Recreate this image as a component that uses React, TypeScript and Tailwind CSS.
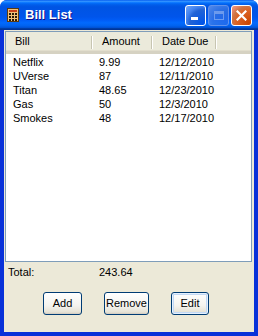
const bills = [
  { name: 'Netflix', amount: '9.99', due: '12/12/2010' },
  { name: 'UVerse', amount: '87', due: '12/11/2010' },
  { name: 'Titan', amount: '48.65', due: '12/23/2010' },
  { name: 'Gas', amount: '50', due: '12/3/2010' },
  { name: 'Smokes', amount: '48', due: '12/17/2010' },
];

const CalcIcon = () => (
  <svg width="12" height="14" viewBox="0 0 12 14">
    <rect x="0.5" y="0.5" width="11" height="13" fill="#f3c27a" stroke="#5a3a10" />
    <rect x="2" y="2" width="8" height="2" fill="#c9421a" />
    {[0, 1, 2].map((r) =>
      [0, 1, 2].map((c) => (
        <rect key={`${r}-${c}`} x={2 + c * 3} y={5 + r * 3} width="2" height="2" fill="#2a1a08" />
      ))
    )}
  </svg>
);

const HeaderCell = ({ label, width }: { label: string; width: string }) => (
  <div className={`relative flex items-center pl-[9px] ${width}`}>
    <span>{label}</span>
    <div className="absolute right-0 top-[4px] h-[13px] w-[2px] border-l border-l-[#c7c5b2] border-r border-r-white" />
  </div>
);

const XpButton = ({ label, width, isDefault = false }: { label: string; width: string; isDefault?: boolean }) => (
  <button
    className={`h-[23px] ${width} rounded-[3px] border border-[#003c74] bg-[linear-gradient(to_bottom,#ffffff_0%,#f4f3ee_60%,#e6e3d6_90%,#d6d0c5_100%)] text-[11px] text-black ${
      isDefault ? 'shadow-[inset_0_0_0_1px_#e4f0fd,inset_0_0_0_2px_#c2d8f4]' : 'shadow-[inset_0_-1px_0_#d6d0c5]'
    }`}
  >
    {label}
  </button>
);

export default function App() {
  return (
    <div
      className="w-[258px] h-[336px] flex flex-col bg-[#0831d9] rounded-t-[7px] overflow-hidden"
      style={{ fontFamily: '"Liberation Sans", Arial, sans-serif' }}
    >
      {/* title bar */}
      <div className="h-[30px] flex items-center pl-[7px] pr-[6px] bg-[linear-gradient(to_bottom,#0058ee_0%,#3593ff_4%,#288eff_6%,#127dff_8%,#036ffc_10%,#0262ee_14%,#0057e5_20%,#0054e3_24%,#0055eb_56%,#005bf5_66%,#026afe_76%,#0062ef_86%,#0052d6_92%,#0040ab_94%,#003092_100%)]">
        <CalcIcon />
        <span className="ml-[6px] text-[13px] font-bold text-white [text-shadow:1px_1px_#0f1089]">Bill List</span>
        <div className="ml-auto flex gap-[2px]">
          <div className="w-[21px] h-[21px] rounded-[3px] border border-white bg-[radial-gradient(circle_at_90%_90%,#0054e9_0%,#2263d5_55%,#4282ee_70%,#5a95f4_85%,#7aa6f5_100%)] flex items-end justify-start pl-[5px] pb-[5px]">
            <div className="w-[7px] h-[3px] bg-white" />
          </div>
          <div className="w-[21px] h-[21px] rounded-[3px] border border-[#8aa8ec] bg-[radial-gradient(circle_at_90%_90%,#2a6ce8_0%,#3b78e3_55%,#5a8ee9_80%,#7aa2ec_100%)] flex items-center justify-center opacity-70">
            <div className="w-[10px] h-[9px] border border-[#9bb8f0] border-t-[3px]" />
          </div>
          <div className="w-[21px] h-[21px] rounded-[3px] border border-white bg-[radial-gradient(circle_at_90%_90%,#cc4600_0%,#dc6527_55%,#cd7546_70%,#e8886a_85%,#f09a82_100%)] flex items-center justify-center">
            <svg width="11" height="11" viewBox="0 0 11 11">
              <path d="M1.5 1.5 L9.5 9.5 M9.5 1.5 L1.5 9.5" stroke="white" strokeWidth="2.2" strokeLinecap="square" />
            </svg>
          </div>
        </div>
      </div>

      {/* client area */}
      <div className="flex-1 mx-[4px] mb-[4px] bg-[#ece9d8] flex flex-col text-[11px] text-black">
        <div className="mt-[1px] ml-[1px] mr-[2px] h-[231px] border border-[#7f9db9] bg-white flex flex-col">
          <div className="h-[22px] flex bg-[#ebeadb] border-b-[3px] border-b-[#d6d2c2] shadow-[inset_0_-1px_0_#e2decd]">
            <HeaderCell label="Bill" width="w-[87px]" />
            <HeaderCell label="Amount" width="w-[60px]" />
            <HeaderCell label="Date Due" width="w-[64px]" />
          </div>
          <div className="pt-[1px]">
            {bills.map((b) => (
              <div key={b.name} className="h-[14px] flex items-center">
                <div className="w-[87px] shrink-0 pl-[7px]">{b.name}</div>
                <div className="w-[60px] shrink-0 pl-[6px]">{b.amount}</div>
                <div className="w-[64px] shrink-0 pl-[6px]">{b.due}</div>
              </div>
            ))}
          </div>
        </div>

        <div className="h-[16px] mt-[2px] flex items-center">
          <div className="w-[95px] pl-[4px]">Total:</div>
          <div>243.64</div>
        </div>

        <div className="mt-[12px] flex pl-[39px]">
          <XpButton label="Add" width="w-[39px]" />
          <div className="w-[22px]" />
          <XpButton label="Remove" width="w-[45px]" />
          <div className="w-[22px]" />
          <XpButton label="Edit" width="w-[38px]" isDefault />
        </div>
      </div>
    </div>
  );
}
